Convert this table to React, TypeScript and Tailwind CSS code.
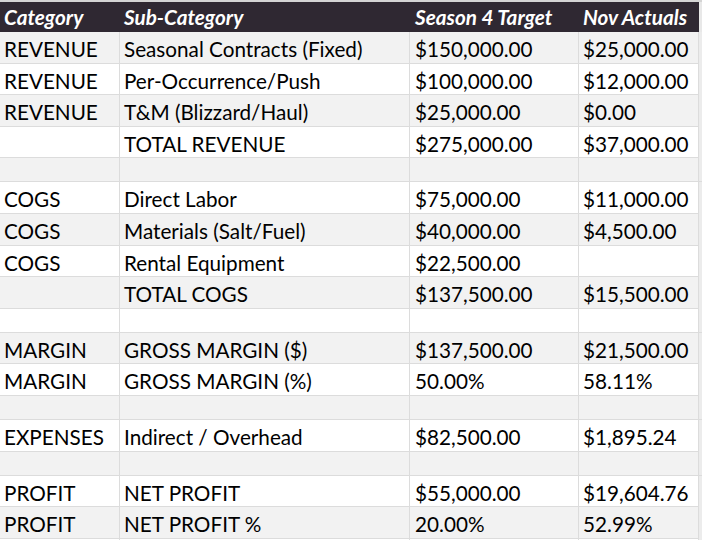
const rows: (string[] | null)[] = [
  ["REVENUE", "Seasonal Contracts (Fixed)", "$150,000.00", "$25,000.00"],
  ["REVENUE", "Per-Occurrence/Push", "$100,000.00", "$12,000.00"],
  ["REVENUE", "T&M (Blizzard/Haul)", "$25,000.00", "$0.00"],
  ["", "TOTAL REVENUE", "$275,000.00", "$37,000.00"],
  null,
  ["COGS", "Direct Labor", "$75,000.00", "$11,000.00"],
  ["COGS", "Materials (Salt/Fuel)", "$40,000.00", "$4,500.00"],
  ["COGS", "Rental Equipment", "$22,500.00", ""],
  ["", "TOTAL COGS", "$137,500.00", "$15,500.00"],
  null,
  ["MARGIN", "GROSS MARGIN ($)", "$137,500.00", "$21,500.00"],
  ["MARGIN", "GROSS MARGIN (%)", "50.00%", "58.11%"],
  null,
  ["EXPENSES", "Indirect / Overhead", "$82,500.00", "$1,895.24"],
  null,
  ["PROFIT", "NET PROFIT", "$55,000.00", "$19,604.76"],
  ["PROFIT", "NET PROFIT %", "20.00%", "52.99%"],
];

const cols = "grid grid-cols-[120px_290px_169px_120px_1fr]";

export default function App() {
  return (
    <div className="w-[702px] h-[540px] overflow-hidden bg-white border-t-2 border-[#d4d4d4] font-['Lato','Liberation_Sans',sans-serif] text-[20.7px] text-black">
      <div className={`${cols} h-[30px] bg-[#2f2832] text-white font-bold italic`}>
        <div className="pl-[4px] flex items-center">Category</div>
        <div className="pl-[4px] flex items-center">Sub-Category</div>
        <div className="pl-[5px] flex items-center">Season 4 Target</div>
        <div className="pl-[4px] flex items-center">Nov Actuals</div>
        <div className="bg-[#e8e8e8]" />
      </div>
      {rows.map((r, i) => (
        <div
          key={i}
          className={`${cols} border-b border-[#dcdcdc] ${r ? "h-[31.6px]" : "h-6"} ${i % 2 === 0 ? "bg-[#f2f2f2]" : "bg-white"}`}
        >
          <div className="pl-[4px] pt-[2px] flex items-center border-r border-[#dcdcdc]">{r?.[0]}</div>
          <div className="pl-[4px] pt-[2px] flex items-center border-r border-[#dcdcdc]">{r?.[1]}</div>
          <div className="pl-[5px] pt-[2px] flex items-center border-r border-[#dcdcdc]">{r?.[2]}</div>
          <div className="pl-[4px] pt-[2px] flex items-center border-r border-[#dcdcdc]">{r?.[3]}</div>
          <div className="bg-[#ececec]" />
        </div>
      ))}
    </div>
  );
}
